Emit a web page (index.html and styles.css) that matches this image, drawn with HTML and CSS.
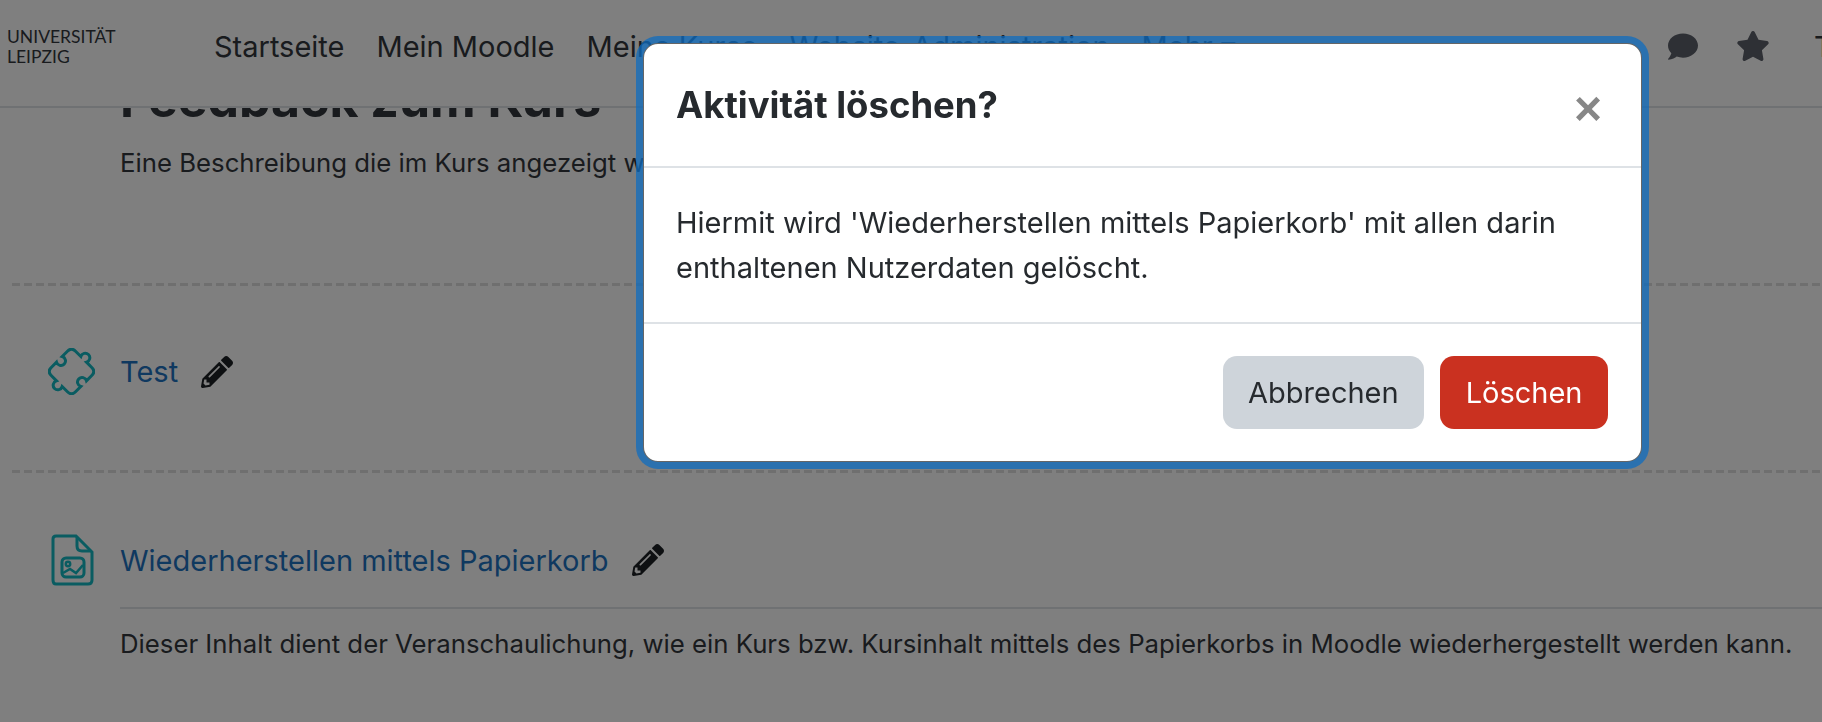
FILE: index.html
```html
<!DOCTYPE html>
<html lang="de">
<head>
    <meta charset="UTF-8">
    <meta name="viewport" content="width=device-width, initial-scale=1.0">
    <title>Aktivität löschen?</title>
    <link rel="stylesheet" href="styles.css">
</head>
<body>
    <header class="navbar">
        <a class="logo" href="#">UNIVERSITÄT<br>LEIPZIG</a>
        <nav class="nav-links">
            <a href="#">Startseite</a>
            <a href="#">Mein Moodle</a>
            <a href="#">Meine Kurse</a>
            <a href="#">Website-Administration</a>
            <a href="#">Mehr ▾</a>
        </nav>
        <div class="nav-right">
            <svg class="nav-icon chat" viewBox="0 32 512 448"><path d="M256 32C114.6 32 0 125.1 0 240c0 49.6 21.4 95 57 130.7C44.5 421.1 2.7 466 2.2 466.5c-2.2 2.3-2.8 5.7-1.5 8.7S4.8 480 8 480c66.3 0 116-31.8 140.6-51.4 32.7 12.3 69 19.4 107.4 19.4 141.4 0 256-93.1 256-208S397.4 32 256 32z"/></svg>
            <svg class="nav-icon star" viewBox="16 0 544 512"><path d="M259.3 17.8L194 150.2 47.9 171.5c-26.2 3.8-36.7 36.1-17.7 54.6l105.7 103-25 145.5c-4.5 26.3 23.2 46 46.4 33.7L288 439.6l130.7 68.7c23.2 12.2 50.9-7.4 46.4-33.7l-25-145.5 105.7-103c19-18.5 8.5-50.8-17.7-54.6L382 150.2 316.7 17.8c-11.7-23.6-45.6-24.1-57.4 0z"/></svg>
            <span class="user">T</span>
        </div>
    </header>

    <main class="page">
        <h1>Feedback zum Kurs</h1>
        <p class="course-desc">Eine Beschreibung die im Kurs angezeigt wird.</p>

        <section class="activity first">
            <div class="activity-row">
                <div class="activity-icon">
                    <svg width="47" height="47" viewBox="-20.5 -20.5 41 41"><path class="outline puzzle" transform="rotate(45)" d="M-10 -15H-3.5A4 4 0 1 1 3.5 -15H10Q15 -15 15 -10V-3.5A4 4 0 1 0 15 3.5V10Q15 15 10 15H3.5A4 4 0 1 1 -3.5 15H-10Q-15 15 -15 10V3.5A4 4 0 1 0 -15 -3.5V-10Q-15 -15 -10 -15Z"/></svg>
                </div>
                <a class="activity-name" href="#">Test</a>
                <svg class="pencil" viewBox="0 0 512 512"><path d="M497.9 142.1l-46.1 46.1c-4.7 4.7-12.3 4.7-17 0l-111-111c-4.7-4.7-4.7-12.3 0-17l46.1-46.1c18.7-18.7 49.1-18.7 67.9 0l60.1 60.1c18.8 18.7 18.8 49.1 0 67.9zM284.2 99.8L21.6 362.4.4 483.9c-2.9 16.4 11.4 30.6 27.8 27.8l121.5-21.3 262.6-262.6c4.7-4.7 4.7-12.3 0-17l-111-111c-4.8-4.7-12.4-4.7-17.1 0zM124.1 339.9c-5.5-5.5-5.5-14.3 0-19.8l154-154c5.5-5.5 14.3-5.5 19.8 0s5.5 14.3 0 19.8l-154 154c-5.5 5.5-14.3 5.5-19.8 0zM88 424h48v36.3l-64.5 11.3-31.1-31.1L51.7 376H88v48z"/></svg>
            </div>
        </section>

        <section class="activity second">
            <div class="activity-row">
                <div class="activity-icon">
                    <svg width="47" height="52" viewBox="0 0 47 52"><path class="outline" d="M8 2H28L44 18V46Q44 50 40 50H8Q5 50 5 46V5Q5 2 8 2Z"/><path class="outline" d="M29 3V12Q29 17 34 17H43"/><rect class="outline" x="14" y="24" width="22" height="19" rx="4"/><circle class="outline thin" cx="20" cy="30" r="2.2"/><path class="outline thin" d="M15 39L22 35L28 39L35 31"/></svg>
                </div>
                <a class="activity-name" href="#">Wiederherstellen mittels Papierkorb</a>
                <svg class="pencil" viewBox="0 0 512 512"><path d="M497.9 142.1l-46.1 46.1c-4.7 4.7-12.3 4.7-17 0l-111-111c-4.7-4.7-4.7-12.3 0-17l46.1-46.1c18.7-18.7 49.1-18.7 67.9 0l60.1 60.1c18.8 18.7 18.8 49.1 0 67.9zM284.2 99.8L21.6 362.4.4 483.9c-2.9 16.4 11.4 30.6 27.8 27.8l121.5-21.3 262.6-262.6c4.7-4.7 4.7-12.3 0-17l-111-111c-4.8-4.7-12.4-4.7-17.1 0zM124.1 339.9c-5.5-5.5-5.5-14.3 0-19.8l154-154c5.5-5.5 14.3-5.5 19.8 0s5.5 14.3 0 19.8l-154 154c-5.5 5.5-14.3 5.5-19.8 0zM88 424h48v36.3l-64.5 11.3-31.1-31.1L51.7 376H88v48z"/></svg>
            </div>
            <p class="activity-desc">Dieser Inhalt dient der Veranschaulichung, wie ein Kurs bzw. Kursinhalt mittels des Papierkorbs in Moodle wiederhergestellt werden kann.</p>
        </section>
    </main>

    <div class="backdrop"></div>

    <div class="modal">
        <div class="modal-header">
            <h2>Aktivität löschen?</h2>
            <button class="close">×</button>
        </div>
        <div class="modal-body">
            <p>Hiermit wird 'Wiederherstellen mittels Papierkorb' mit allen darin enthaltenen Nutzerdaten gelöscht.</p>
        </div>
        <div class="modal-footer">
            <button class="btn btn-cancel">Abbrechen</button>
            <button class="btn btn-delete">Löschen</button>
        </div>
    </div>
</body>
</html>
```

FILE: styles.css
```css
html, body {
    height: 100%;
}
body {
    font-family: Inter, "Noto Sans", sans-serif;
    font-size: 29px;
    line-height: 45px;
    margin: 0;
    padding: 0;
    background-color: #fff;
    color: #33373c;
    overflow: hidden;
}
a {
    color: inherit;
    text-decoration: none;
}

/* top bar */
.navbar {
    position: fixed;
    top: 0;
    left: 0;
    right: 0;
    height: 108px;
    box-sizing: border-box;
    display: flex;
    align-items: center;
    padding-left: 7px;
    background-color: #fff;
    border-bottom: 2px solid #dee2e6;
    overflow: hidden;
    z-index: 2;
}
.logo {
    width: 207px;
    flex-shrink: 0;
    font-family: Lato, sans-serif;
    font-weight: 400;
    font-size: 17.5px;
    line-height: 20px;
    margin-top: -12px;
}
.nav-links {
    flex: 1;
    display: flex;
    gap: 32px;
    margin-top: -13px;
    white-space: nowrap;
}
.nav-right {
    width: 154px;
    flex-shrink: 0;
    display: flex;
    align-items: center;
    margin-top: -14px;
    white-space: nowrap;
}
.nav-icon {
    fill: #5d616b;
    flex-shrink: 0;
}
.chat {
    width: 30px;
    height: 27px;
    margin-right: 39px;
}
.star {
    width: 32px;
    height: 30px;
    margin-right: 45px;
}

/* page under the dialog */
.page {
    padding: 75px 0 0 12px;
}
h1 {
    font-size: 50px;
    line-height: 48px;
    font-weight: 700;
    margin: 0 0 17px 108px;
}
.course-desc {
    font-size: 25.75px;
    margin: 0 0 98px 108px;
}
.activity {
    padding: 65px 0 75px;
    background-image: repeating-linear-gradient(to right, #dedede 0 8px, transparent 8px 12px);
    background-size: 100% 3px;
    background-repeat: no-repeat;
}
.activity.second {
    padding-top: 64px;
    padding-bottom: 0;
}
.activity-row {
    display: flex;
    align-items: center;
}
.activity-icon {
    width: 47px;
    margin: 0 25px 0 36px;
    display: flex;
    justify-content: center;
}
.outline {
    fill: none;
    stroke: #14b8c2;
    stroke-width: 3;
}
.puzzle {
    stroke-width: 2.6;
}
.thin {
    stroke-width: 2.5;
}
.activity-name {
    color: #1f73c0;
}
.pencil {
    width: 32px;
    height: 32px;
    margin-left: 23px;
    fill: #1d2125;
}
.activity-desc {
    font-size: 25.75px;
    margin: 21px 0 0 108px;
    padding-top: 12px;
    border-top: 2px solid #dee2e6;
    white-space: nowrap;
}

/* dialog */
.backdrop {
    position: fixed;
    top: 0;
    left: 0;
    right: 0;
    bottom: 0;
    background-color: rgba(0, 0, 0, 0.5);
    z-index: 3;
}
.modal {
    position: fixed;
    top: 43px;
    left: 643px;
    width: 999px;
    box-sizing: border-box;
    background-color: #fff;
    border: 1px solid rgba(0, 0, 0, 0.6);
    border-radius: 15px;
    box-shadow: 0 0 0 7px rgba(15, 108, 191, 0.75);
    color: #262a2e;
    z-index: 4;
}
.modal-header {
    height: 124px;
    box-sizing: border-box;
    display: flex;
    justify-content: space-between;
    padding: 34px 33px 0 32px;
    border-bottom: 2px solid #dee2e6;
}
.modal-header h2 {
    margin: 0;
    font-size: 36.5px;
    line-height: 54px;
    font-weight: 700;
}
.close {
    border: none;
    background: none;
    padding: 0;
    font-family: "Liberation Sans", sans-serif;
    font-size: 48px;
    line-height: 62px;
    height: 62px;
    font-weight: 700;
    color: #878787;
    margin-right: 6px;
    margin-top: 0;
}
.modal-body {
    padding: 32px 33px 32px 32px;
    border-bottom: 2px solid #dee2e6;
}
.modal-body p {
    margin: 0;
}
.modal-footer {
    display: flex;
    justify-content: flex-end;
    gap: 16px;
    padding: 32px 33px;
}
.btn {
    height: 73px;
    padding: 0 25.5px;
    border: none;
    border-radius: 14px;
    font-family: inherit;
    font-size: 29px;
}
.btn-cancel {
    background-color: #ced4da;
    color: #262a2e;
}
.btn-delete {
    background-color: #ca3120;
    color: #fff;
}
```
